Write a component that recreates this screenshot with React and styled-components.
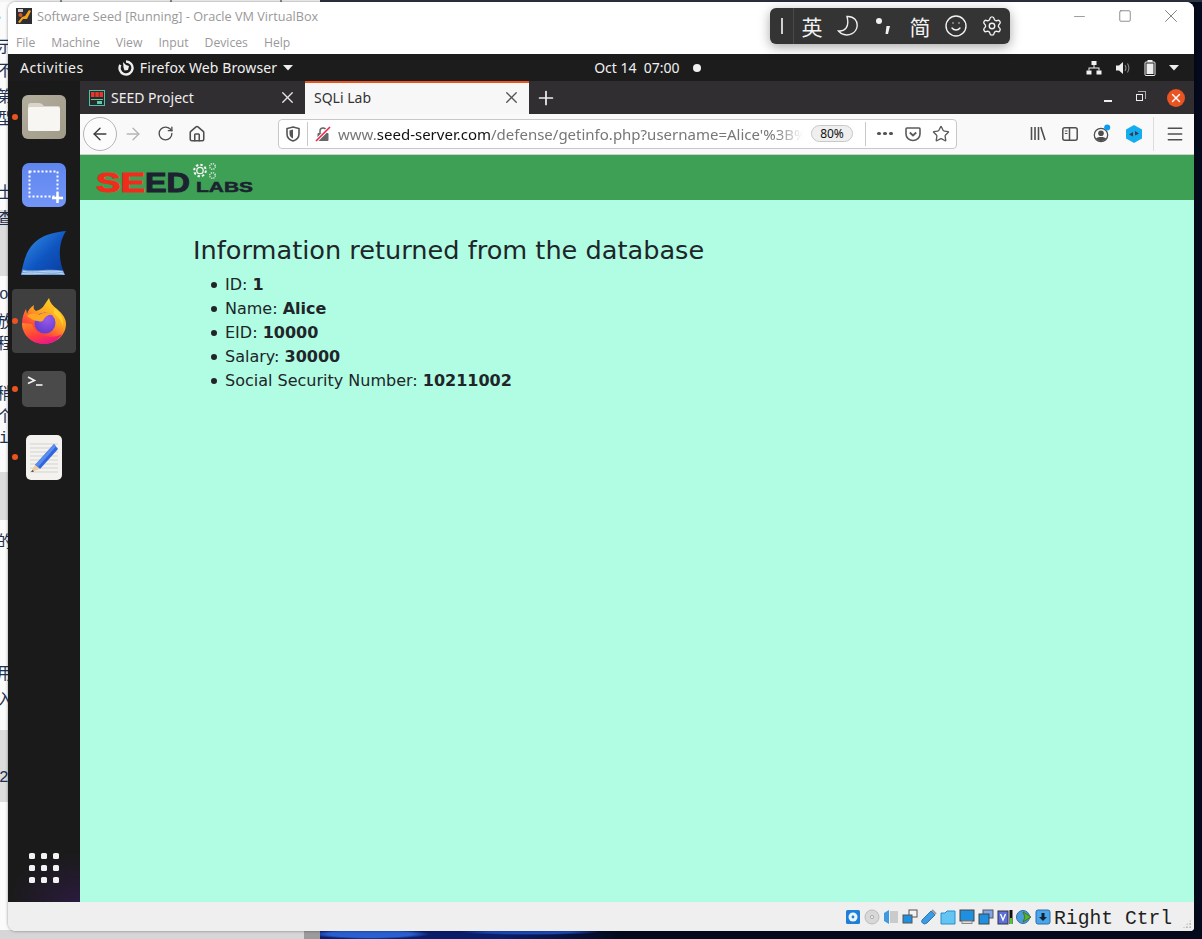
import React from 'react';
import styled, { createGlobalStyle } from 'styled-components';
import { ArrowLeft, ArrowRight, RotateCw, House, Star, Menu, X, Plus, Minus, Smile, Settings, Square } from 'lucide-react';

const GlobalStyle = createGlobalStyle`
  html, body { margin: 0; padding: 0; background: #040a1c; }
  * { box-sizing: border-box; }
`;

const edgeText = [
  { top: 14, text: '’' }, { top: 36, text: '示' }, { top: 60, text: '不' }, { top: 86, text: '第' },
  { top: 108, text: '型' }, { top: 182, text: '士' }, { top: 208, text: '查' }, { top: 286, text: 'ol', mono: true },
  { top: 311, text: '放' }, { top: 333, text: '程' }, { top: 383, text: '稍' }, { top: 406, text: '个' },
  { top: 430, text: 'i', mono: true }, { top: 531, text: '的' }, { top: 663, text: '用' }, { top: 689, text: '入' },
  { top: 769, text: '25', mono: true },
];

const bands = [
  { top: 210, height: 66 },
  { top: 472, height: 48 },
  { top: 730, height: 72 },
];

function WindowIcon() {
  return (
    <svg width="16" height="16" viewBox="0 0 16 16">
      <rect width="16" height="16" fill="#2d2d33" />
      <path d="M2 14 L6 9 L9 8 L13 2 L15 3 L11 11 L7 11 L4 15 Z" fill="#f2a31c" />
      <circle cx="4.5" cy="7" r="2" fill="#d9541e" />
      <rect x="2" y="1" width="5" height="3" fill="#c9c9c9" />
    </svg>
  );
}

function FirefoxGlyph() {
  return (
    <svg width="16" height="16" viewBox="0 0 16 16" fill="none">
      <path d="M8 1.5 A6.5 6.5 0 1 1 2.4 4.8" stroke="#f0f0f0" strokeWidth="2.4" />
      <path d="M5 2 L8 5 L11 6 L10 10 L6.5 10.5 L5.5 7.5 Z" fill="#f0f0f0" />
    </svg>
  );
}

function Caret({ color = '#eee' }) {
  return (
    <svg width="10" height="6" viewBox="0 0 10 6"><path d="M0 0 H10 L5 5.5 Z" fill={color} /></svg>
  );
}

function NetworkIcon() {
  return (
    <svg width="16" height="14" viewBox="0 0 16 14" fill="#f0f0f0">
      <rect x="5.5" y="0" width="5" height="4" />
      <rect x="0.5" y="9.5" width="5" height="4" />
      <rect x="10.5" y="9.5" width="5" height="4" />
      <path d="M7.5 4h1v2.5h5v3h-1v-2h-9v2h-1v-3h5z" />
    </svg>
  );
}

function VolumeIcon() {
  return (
    <svg width="16" height="14" viewBox="0 0 16 14" fill="none">
      <path d="M1 4.5 H4 L8 1 V13 L4 9.5 H1 Z" fill="#eee" />
      <path d="M10 4 Q12 7 10 10 M12.5 2.5 Q15.2 7 12.5 11.5" stroke="#888" strokeWidth="1.1" />
    </svg>
  );
}

function BatteryIcon() {
  return (
    <svg width="12" height="16" viewBox="0 0 12 16">
      <rect x="3.5" y="0" width="5" height="2" fill="#eee" />
      <rect x="1" y="2" width="10" height="13.5" rx="1" fill="none" stroke="#eee" />
      <rect x="2.5" y="3.5" width="7" height="10.5" fill="#eee" />
    </svg>
  );
}

function FilesIcon() {
  return (
    <svg width="44" height="44" viewBox="0 0 44 44">
      <defs>
        <linearGradient id="filesBg" x1="0" y1="0" x2="1" y2="1">
          <stop offset="0" stopColor="#b3ad9e" />
          <stop offset="1" stopColor="#a09a88" />
        </linearGradient>
      </defs>
      <rect width="44" height="44" rx="6" fill="url(#filesBg)" />
      <path d="M6 11 Q6 8 9 8 H17 Q20 8 22 11 H36 Q38 11 38 13 V34 Q38 36 36 36 H8 Q6 36 6 34 Z" fill="#d9d5ca" />
      <path d="M6 14 Q6 12 8 12 H36 Q38 12 38 14 V34 Q38 36 36 36 H8 Q6 36 6 34 Z" fill="#f7f6f3" />
    </svg>
  );
}

function ScreenshotIcon() {
  return (
    <svg width="44" height="44" viewBox="0 0 44 44" fill="none">
      <defs>
        <linearGradient id="shotBg" x1="0" y1="0" x2="0" y2="1">
          <stop offset="0" stopColor="#5f86ef" />
          <stop offset="1" stopColor="#7395f7" />
        </linearGradient>
      </defs>
      <rect width="44" height="44" rx="7" fill="url(#shotBg)" />
      <rect x="7.5" y="8.5" width="28" height="25" stroke="#fff" strokeWidth="2" strokeDasharray="2 2" />
      <path d="M30 35 H41 M35.5 29.5 V40" stroke="#fff" strokeWidth="2.4" />
    </svg>
  );
}

function WiresharkIcon() {
  return (
    <svg width="46" height="46" viewBox="0 0 46 46">
      <defs>
        <linearGradient id="finBg" x1="0" y1="0" x2="1" y2="1">
          <stop offset="0" stopColor="#3a94ee" />
          <stop offset="0.55" stopColor="#0f55c0" />
          <stop offset="1" stopColor="#0a3c9c" />
        </linearGradient>
      </defs>
      <path d="M0 45 C4 22 10 4 45 1 C38 12 36 28 44 45 Z" fill="url(#finBg)" />
      <path d="M0 45 C0.5 43 1 41 1.5 39.5 C14 42 28 38 42 40.5 L44 45 Z" fill="#6f9fd8" />
      <path d="M2 41.5 C14 43.5 28 39.5 42 42 M1 43.5 C14 45 30 41 43 44" stroke="#dbe8f7" strokeWidth="0.8" fill="none" />
    </svg>
  );
}

function FirefoxIcon() {
  return (
    <svg width="44" height="46" viewBox="0 0 44 46">
      <defs>
        <linearGradient id="foxBody" x1="0.9" y1="0" x2="0.3" y2="1">
          <stop offset="0" stopColor="#ffe226" />
          <stop offset="0.45" stopColor="#ffa11f" />
          <stop offset="0.72" stopColor="#ff4a3a" />
          <stop offset="1" stopColor="#e2138a" />
        </linearGradient>
        <linearGradient id="foxLeft" x1="0" y1="0" x2="0.6" y2="1">
          <stop offset="0" stopColor="#ff8a1e" />
          <stop offset="0.6" stopColor="#ff3d3d" />
          <stop offset="1" stopColor="#e8178a" />
        </linearGradient>
        <radialGradient id="foxGlobe" cx="0.6" cy="0.3" r="0.8">
          <stop offset="0" stopColor="#9b59ea" />
          <stop offset="1" stopColor="#5a39c9" />
        </radialGradient>
      </defs>
      <path d="M27 0 C28 5 31 8 35 11 C41 16 44 21 44 26 C44 37 34 46 22 46 C10 46 0 37 0 25 C0 19 2 15 4 11 L5 16 C6 12 9 9 12 7 C11 10 12 12 14 13 C17 12 19 11 21 9 C23 6 25 3 27 0 Z" fill="url(#foxBody)" />
      <path d="M0 25 C0 37 10 46 22 46 C30 46 36 42 40 36 C30 42 14 38 10 26 Z" fill="url(#foxLeft)" />
      <circle cx="23" cy="25" r="10.5" fill="url(#foxGlobe)" />
      <path d="M5 18 C9 15 13 15 17 17 C21 14 27 14 31 17 C27 16 24 18 22 21 C21 24 18 24 16 23 C13 23 9 21 5 18 Z" fill="#ffa623" />
      <path d="M32 10 C38 14 42 20 41 28 C39 22 36 18 32 16 Z" fill="#ffcf2b" />
    </svg>
  );
}

function TerminalIcon() {
  return (
    <svg width="44" height="36" viewBox="0 0 44 36" fill="none">
      <rect width="44" height="36" rx="5" fill="#4a4a4a" />
      <path d="M6 6 L12.5 9.5 L6 12.5" stroke="#f2f2f2" strokeWidth="1.6" />
      <path d="M14 14 H20.5" stroke="#f2f2f2" strokeWidth="1.6" />
    </svg>
  );
}

function GeditIcon() {
  return (
    <svg width="36" height="45" viewBox="0 0 36 45" fill="none">
      <rect width="36" height="45" rx="5" fill="#f3f2ef" />
      <path d="M4 9 H32 M4 13 H32 M4 17 H32 M4 21 H32 M4 25 H32 M4 29 H32 M4 33 H32 M4 37 H32" stroke="#d4d3cf" strokeWidth="1" />
      <path d="M28 9 L32 14 L14 34 L9 30 Z" fill="#2f66dd" />
      <path d="M28 9 L30 11.5 L12 32 L9 30 Z" fill="#5a8cf0" />
      <path d="M9 30 L14 34 L5 37 Z" fill="#eccf9c" />
      <path d="M6.5 35 L8 36.5 L5 37 Z" fill="#333" />
    </svg>
  );
}

function FaviconSeed() {
  return (
    <svg width="16" height="16" viewBox="0 0 16 16">
      <rect width="16" height="16" fill="#4ac4a8" />
      <rect x="1" y="1" width="14" height="14" fill="#2a2a2a" />
      <rect x="2" y="2" width="3.5" height="5" fill="#e8362a" />
      <rect x="6.3" y="2" width="3.5" height="5" fill="#e8362a" />
      <rect x="10.5" y="2" width="3.5" height="5" fill="#e8362a" />
      <rect x="2" y="9" width="12" height="1" fill="#5ec8a8" />
      <rect x="8" y="11" width="5" height="3" fill="#5ec8a8" />
    </svg>
  );
}

function ShieldIcon() {
  return (
    <svg width="14" height="16" viewBox="0 0 14 16" fill="none">
      <path d="M7 1 L13 2.5 V8 C13 11.5 10 14 7 15 C4 14 1 11.5 1 8 V2.5 Z" stroke="#555" strokeWidth="1.6" />
      <path d="M7 3.5 V12.5 C5 11.5 3.5 10 3.5 8 V4.5 Z" fill="#555" />
    </svg>
  );
}

function BrokenLock() {
  return (
    <svg width="16" height="16" viewBox="0 0 16 16" fill="none">
      <path d="M5 7 V5 A3 3 0 0 1 11 5 V7" stroke="#666" strokeWidth="1.5" />
      <rect x="2.5" y="7" width="11" height="8" rx="1" fill="#666" />
      <path d="M1 15 L15 1" stroke="#fff" strokeWidth="3.6" />
      <path d="M1 15 L15 1" stroke="#e8254d" strokeWidth="1.6" />
    </svg>
  );
}

function PocketIcon() {
  return (
    <svg width="16" height="16" viewBox="0 0 16 16" fill="none">
      <path d="M2 2 H14 Q15 2 15 3 V8 A7 6.5 0 0 1 1 8 V3 Q1 2 2 2 Z" stroke="#5b5b5b" strokeWidth="1.6" />
      <path d="M4.8 6.5 L8 9.5 L11.2 6.5" stroke="#5b5b5b" strokeWidth="1.8" />
    </svg>
  );
}

function LibraryIcon() {
  return (
    <svg width="16" height="15" viewBox="0 0 16 15" stroke="#4f4f4f" strokeWidth="1.6" fill="none">
      <path d="M1.5 1 V14 M5 1 V14 M8.5 1 V14 M10.8 1 L15 14" />
    </svg>
  );
}

function SidebarIcon() {
  return (
    <svg width="16" height="14" viewBox="0 0 16 14" fill="none" stroke="#4f4f4f" strokeWidth="1.5">
      <rect x="0.8" y="0.8" width="14.4" height="12.4" rx="2" />
      <path d="M7.5 1 V13" />
      <path d="M2.8 4 H5.5 M2.8 6.5 H5.5" strokeWidth="1" />
    </svg>
  );
}

function AccountIcon() {
  return (
    <svg width="20" height="20" viewBox="0 0 20 20" fill="none">
      <circle cx="9" cy="11" r="6.7" stroke="#4f4f4f" strokeWidth="1.3" />
      <circle cx="9" cy="9.2" r="2.8" fill="#4f4f4f" />
      <path d="M3.8 14.8 C5 12.4 13 12.4 14.2 14.8 A6.7 6.7 0 0 1 3.8 14.8 Z" fill="#4f4f4f" />
      <circle cx="15.2" cy="3.6" r="3" fill="#0a9cf0" />
    </svg>
  );
}

function ExtensionIcon() {
  return (
    <svg width="16" height="18" viewBox="0 0 16 18">
      <path d="M8 0 L16 4.5 V13.5 L8 18 L0 13.5 V4.5 Z" fill="#12aef0" />
      <path d="M3 9.5 L7 7 V11.5 Z M13 8.5 L9 6 V10.5 Z" fill="#3c3c48" />
    </svg>
  );
}

function ImeDots() {
  return (
    <svg width="18" height="20" viewBox="0 0 18 20" fill="#f2f2f2">
      <circle cx="4" cy="5" r="3" />
      <path d="M11.5 10 H15 L13 18 H10.5 Z" />
    </svg>
  );
}

function ImeMoon() {
  return (
    <svg width="22" height="22" viewBox="0 0 22 22" fill="none">
      <path d="M10 1.5 C17 1 21 6 20 12 C19 18 12 21 7 19.5 C5 19 3 18 1.5 16 C7 16.5 13 13 10 1.5 Z" stroke="#eee" strokeWidth="1.4" />
    </svg>
  );
}

function SeedLogo() {
  return (
    <svg width="160" height="32" viewBox="0 0 160 32">
      <text x="0" y="29" fontFamily="Liberation Sans, sans-serif" fontWeight="700" fontSize="27" textLength="49" lengthAdjust="spacingAndGlyphs" fill="#f22c1c" stroke="#f22c1c" strokeWidth="1">SE</text>
      <text x="49" y="29" fontFamily="Liberation Sans, sans-serif" fontWeight="700" fontSize="27" textLength="45" lengthAdjust="spacingAndGlyphs" fill="#1d2230" stroke="#1d2230" strokeWidth="1">ED</text>
      <text x="100" y="29" fontFamily="Liberation Sans, sans-serif" fontWeight="700" fontSize="15" textLength="57" lengthAdjust="spacingAndGlyphs" fill="#1d2230" stroke="#1d2230" strokeWidth="0.5">LABS</text>
      <circle cx="104" cy="7.5" r="3.2" fill="none" stroke="#f4f4f4" strokeWidth="1.3" />
      <circle cx="104" cy="7.5" r="5.8" fill="none" stroke="#f4f4f4" strokeWidth="2" strokeDasharray="2.4 2.1" />
      <circle cx="116.5" cy="3.5" r="2.8" fill="none" stroke="#d5e2d5" strokeWidth="1.6" strokeDasharray="1.2 1" />
      <circle cx="116.5" cy="12.5" r="2.8" fill="none" stroke="#d5e2d5" strokeWidth="1.6" strokeDasharray="1.2 1" />
    </svg>
  );
}

const statusIcons = [
  <g key="hd"><rect x="1" y="1" width="14" height="14" rx="1.5" fill="#1d7fd8" /><circle cx="8" cy="8" r="4.5" fill="#eaf4fd" /><circle cx="8" cy="8" r="1.4" fill="#1d7fd8" /></g>,
  <g key="cd"><circle cx="8" cy="8" r="7" fill="#d8d8d8" stroke="#bbb" /><circle cx="8" cy="8" r="1.6" fill="#f4f4f4" stroke="#aaa" /></g>,
  <g key="audio"><path d="M1 4 L6 1 V15 L1 12 Z" fill="#3f9be0" /><path d="M7 3 H15 M7 5 H15 M7 7 H15 M7 9 H15 M7 11 H15 M7 13 H15" stroke="#a5a5a5" /></g>,
  <g key="net"><rect x="7" y="1" width="8" height="7" fill="#f4f4f4" stroke="#555" /><rect x="1" y="6" width="9" height="8" fill="#1f8fe0" stroke="#555" /></g>,
  <g key="usb"><path d="M1 11 L10 2 L14 6 L6 14 Q3 16 1.5 14 Q0 13 1 11 Z" fill="#3f9be0" stroke="#2878c0" /><path d="M11 1 L15 5" stroke="#999" strokeWidth="2" /></g>,
  <g key="folder"><path d="M1 4 V15 H15 V2 H7 L5 4 Z" fill="#63c5f4" stroke="#2d8ccc" /></g>,
  <g key="display"><rect x="1" y="1" width="14" height="11" fill="#1f8fe0" stroke="#444" /><rect x="3" y="12" width="10" height="2.5" fill="#ddd" stroke="#888" /></g>,
  <g key="capture"><rect x="5" y="1" width="10" height="8" fill="#7fa8e8" stroke="#556" /><rect x="1" y="5" width="10" height="10" fill="#1f8fe0" stroke="#444" /></g>,
  <g key="vt"><rect x="1" y="2" width="10" height="13" fill="#5b6fd8" stroke="#334" /><path d="M3.5 5 L6 11 L8.5 5" stroke="#fff" strokeWidth="1.4" fill="none" /><rect x="12.5" y="1" width="3" height="14" fill="#111" /><rect x="13" y="9" width="2" height="6" fill="#4ecb2a" /></g>,
  <g key="globe"><circle cx="7" cy="8" r="6.5" fill="#4a9bd8" stroke="#2a6ca8" /><path d="M7 3 L15 8 L7 13 L9 8 Z" fill="#5cb531" stroke="#387a1e" /></g>,
  <g key="down"><rect x="1" y="1" width="14" height="14" rx="2" fill="#4aa5ea" stroke="#2a6ca8" /><path d="M6.5 4 H9.5 V8 H12 L8 12 L4 8 H6.5 Z" fill="#123" /></g>,
];

export default function App() {
  return (
    <>
      <GlobalStyle />
      <Desktop>
        <BackWindow>
          <TopCrumbs />
          {bands.map((b) => (
            <GreyBand key={b.top} $top={b.top} $height={b.height} />
          ))}
          {edgeText.map((t) => (
            <EdgeGlyph key={t.top} $top={t.top} $mono={t.mono}>{t.text}</EdgeGlyph>
          ))}
          <BackFoot />
        </BackWindow>
        <WallStreak />

        <VmWindow>
          <TitleBar>
            <WindowIcon />
            <TitleText>Software Seed [Running] - Oracle VM VirtualBox</TitleText>
            <WinButtons>
              <WinButton><Minus size={17} strokeWidth={1} /></WinButton>
              <WinButton><Square size={14} strokeWidth={1.4} /></WinButton>
              <WinButton><X size={22} strokeWidth={1} /></WinButton>
            </WinButtons>
          </TitleBar>
          <MenuBar>
            <span>File</span><span>Machine</span><span>View</span><span>Input</span><span>Devices</span><span>Help</span>
          </MenuBar>

          <GnomeBar>
            <Activities>Activities</Activities>
            <AppMenu><FirefoxGlyph /><span>Firefox Web Browser</span><Caret /></AppMenu>
            <Clock>Oct 14&nbsp;&nbsp;07:00</Clock>
            <ClockDot />
            <Tray>
              <NetworkIcon />
              <VolumeIcon />
              <BatteryIcon />
              <Caret />
            </Tray>
          </GnomeBar>

          <Guest>
            <Dock>
              <DockItem><FilesIcon /><RunDot /></DockItem>
              <DockItem><ScreenshotIcon /></DockItem>
              <DockItem><WiresharkIcon /></DockItem>
              <DockItem $active><FirefoxIcon /><RunDot /></DockItem>
              <DockItem><TerminalIcon /><RunDot /></DockItem>
              <DockItem><GeditIcon /><RunDot /></DockItem>
              <AppGrid>
                {Array.from({ length: 9 }).map((_, i) => <i key={i} />)}
              </AppGrid>
            </Dock>

            <Browser>
              <TabBar>
                <Tab>
                  <FaviconSeed />
                  <TabLabel>SEED Project</TabLabel>
                  <X size={19} strokeWidth={1.7} color="#e6e6e6" />
                </Tab>
                <Tab $active>
                  <TabLabel>SQLi Lab</TabLabel>
                  <X size={19} strokeWidth={1.7} color="#555" />
                </Tab>
                <NewTab><Plus size={22} strokeWidth={1.9} color="#eee" /></NewTab>
                <BrowserControls>
                  <MinGlyph />
                  <RestoreGlyph />
                  <CloseCircle><X size={14} strokeWidth={2.4} color="#fff" /></CloseCircle>
                </BrowserControls>
              </TabBar>

              <NavBar>
                <BackButton><ArrowLeft size={20} strokeWidth={1.7} color="#3d3d3d" /></BackButton>
                <ToolSlot><ArrowRight size={20} strokeWidth={1.6} color="#b5b5b5" /></ToolSlot>
                <ToolSlot><RotateCw size={17} strokeWidth={1.9} color="#4f4f4f" /></ToolSlot>
                <ToolSlot><House size={18} strokeWidth={2.1} color="#4f4f4f" /></ToolSlot>
                <UrlBox>
                  <IconSlot $width={28}><ShieldIcon /></IconSlot>
                  <UrlDivider />
                  <IconSlot $width={29}><BrokenLock /></IconSlot>
                  <UrlText>www.<b>seed-server.com</b>/defense/getinfo.php?username=Alice'%3B%</UrlText>
                  <ZoomPill>80%</ZoomPill>
                  <UrlDivider $gap={12} />
                  <Ellipsis><i /><i /><i /></Ellipsis>
                  <IconSlot $width={28}><PocketIcon /></IconSlot>
                  <IconSlot $width={28}><Star size={18} strokeWidth={1.8} color="#5b5b5b" /></IconSlot>
                </UrlBox>
                <ExtraTools>
                  <ToolSlot><LibraryIcon /></ToolSlot>
                  <ToolSlot><SidebarIcon /></ToolSlot>
                  <ToolSlot><AccountIcon /></ToolSlot>
                  <ToolSlot><ExtensionIcon /></ToolSlot>
                </ExtraTools>
                <ToolDivider />
                <ToolSlot><Menu size={20} strokeWidth={1.8} color="#4f4f4f" /></ToolSlot>
              </NavBar>

              <SiteHeader><SeedLogo /></SiteHeader>
              <SiteBody>
                <Heading>Information returned from the database</Heading>
                <InfoList>
                  <li>ID: <b>1</b></li>
                  <li>Name: <b>Alice</b></li>
                  <li>EID: <b>10000</b></li>
                  <li>Salary: <b>30000</b></li>
                  <li>Social Security Number: <b>10211002</b></li>
                </InfoList>
              </SiteBody>
            </Browser>
          </Guest>

          <StatusBar>
            <StatusIcons>
              {statusIcons.map((icon) => (
                <svg key={icon.key} width="16" height="16" viewBox="0 0 16 16">{icon}</svg>
              ))}
            </StatusIcons>
            <HostKey>Right Ctrl</HostKey>
            <Grip />
          </StatusBar>
        </VmWindow>

        <ImeBar>
          <ImeCursor />
          <ImeDivider />
          <ImeCell $cjk>英</ImeCell>
          <ImeCell><ImeMoon /></ImeCell>
          <ImeCell><ImeDots /></ImeCell>
          <ImeCell $cjk>简</ImeCell>
          <ImeCell><Smile size={24} strokeWidth={1.4} /></ImeCell>
          <ImeCell><Settings size={22} strokeWidth={1.5} /></ImeCell>
        </ImeBar>
      </Desktop>
    </>
  );
}

const Desktop = styled.div`
  position: relative;
  width: 1202px;
  height: 939px;
  padding: 2px 8px 8px;
  overflow: hidden;
  background: linear-gradient(#2c3342 0 2px, #040a1c 2px);
`;

const BackWindow = styled.div`
  position: absolute;
  left: 0;
  top: 0;
  width: 320px;
  height: 939px;
  overflow: hidden;
  background: #fbfbfb;
`;

const TopCrumbs = styled.div`
  height: 2px;
  background: repeating-linear-gradient(90deg, #f4f4f4 0 60px, #8a8a8a 60px 62px, #f4f4f4 62px 110px);
`;

const GreyBand = styled.div`
  position: absolute;
  left: 0;
  right: 0;
  top: ${(p) => p.$top}px;
  height: ${(p) => p.$height}px;
  background: #dcdcdc;
`;

const EdgeGlyph = styled.span`
  position: absolute;
  left: ${(p) => (p.$mono ? '-1px' : '-3px')};
  top: ${(p) => p.$top}px;
  font: 16px/18px ${(p) => (p.$mono ? '"Liberation Mono", monospace' : '"Noto Sans CJK SC", sans-serif')};
  color: #1e3050;
`;

const BackFoot = styled.div`
  position: absolute;
  left: 0;
  right: 0;
  bottom: 0;
  height: 9px;
  background: linear-gradient(90deg, #d6d6d6 304px, #9b9b9b 304px);
`;

const WallStreak = styled.div`
  position: absolute;
  left: 320px;
  bottom: 0;
  width: 300px;
  height: 8px;
  background: radial-gradient(ellipse 60px 5px at 50px 3px, #2a5fd0 70%, transparent 100%),
    radial-gradient(ellipse 70px 3px at 210px 1px, #1c4ab8 60%, transparent 100%),
    linear-gradient(90deg, #0a1d6a 60%, transparent);
`;

const VmWindow = styled.div`
  position: relative;
  width: 1186px;
  height: 929px;
  display: flex;
  flex-direction: column;
  overflow: hidden;
  border-radius: 8px 8px 4px 8px;
  background: #fff;
  box-shadow: 0 0 3px rgba(0, 0, 0, 0.45);
`;

const TitleBar = styled.div`
  height: 34px;
  flex: none;
  display: flex;
  align-items: center;
  padding: 0 0 6px 8px;
  background: #fff;
`;

const TitleText = styled.span`
  margin-left: 5px;
  font: 12.7px "Open Sans", sans-serif;
  color: #999;
`;

const WinButtons = styled.div`
  margin-left: auto;
  display: flex;
  color: #777;
`;

const WinButton = styled.div`
  width: 46px;
  height: 26px;
  display: flex;
  align-items: center;
  justify-content: center;
`;

const MenuBar = styled.div`
  height: 18px;
  flex: none;
  display: flex;
  align-items: flex-start;
  gap: 16px;
  padding: 0 0 0 8px;
  font: 12.2px/14px "Open Sans", sans-serif;
  color: #999;
`;

const GnomeBar = styled.div`
  height: 27px;
  flex: none;
  display: flex;
  align-items: center;
  padding-left: 12px;
  background: #1c1c1c;
  color: #f0f0f0;
  font: 14px "Noto Sans", sans-serif;
`;

const Activities = styled.span`
  letter-spacing: 0.55px;
`;

const AppMenu = styled.div`
  display: flex;
  align-items: center;
  gap: 6px;
  margin-left: 34px;
  letter-spacing: 0.1px;
`;

const Clock = styled.span`
  flex: none;
  width: 86px;
  margin-left: 301px;
  white-space: nowrap;
`;

const ClockDot = styled.span`
  width: 8px;
  height: 8px;
  margin-left: 13px;
  border-radius: 50%;
  background: #f0f0f0;
`;

const Tray = styled.div`
  margin-left: auto;
  display: flex;
  align-items: center;
  gap: 13px;
  padding-right: 15px;
`;

const Guest = styled.div`
  flex: 1;
  min-height: 0;
  display: flex;
`;

const Dock = styled.div`
  position: relative;
  width: 72px;
  flex: none;
  display: flex;
  flex-direction: column;
  align-items: center;
  padding: 2px 0 19px;
  background: radial-gradient(ellipse 70px 50px at 70px 100%, #2a1b3d 0, transparent 100%), #1a1a1a;
`;

const DockItem = styled.div`
  position: relative;
  width: 64px;
  height: 64px;
  margin: 2px 0;
  flex: none;
  display: flex;
  align-items: center;
  justify-content: center;
  border-radius: 4px;
  background: ${(p) => (p.$active ? '#3f3f3f' : 'transparent')};
`;

const RunDot = styled.span`
  position: absolute;
  left: 0;
  top: 50%;
  width: 6px;
  height: 6px;
  margin-top: -3px;
  border-radius: 50%;
  background: #e95420;
`;

const AppGrid = styled.div`
  margin-top: auto;
  display: grid;
  grid-template-columns: repeat(3, 6px);
  gap: 6px;
  i {
    height: 6px;
    border-radius: 1.5px;
    background: #f2f2f2;
  }
`;

const Browser = styled.div`
  flex: 1;
  min-width: 0;
  display: flex;
  flex-direction: column;
`;

const TabBar = styled.div`
  height: 33px;
  flex: none;
  display: flex;
  background: #312e31;
`;

const Tab = styled.div`
  width: ${(p) => (p.$active ? '224px' : '225px')};
  display: flex;
  align-items: center;
  gap: 6px;
  padding: 0 8px 2px 9px;
  background: ${(p) => (p.$active ? '#f7f7f7' : 'transparent')};
  border-top: 2px solid ${(p) => (p.$active ? '#e95420' : 'transparent')};
  color: ${(p) => (p.$active ? '#333' : '#eee')};
  font: 14px "Noto Sans", sans-serif;
`;

const TabLabel = styled.span`
  flex: 1;
`;

const NewTab = styled.div`
  width: 34px;
  display: flex;
  align-items: center;
  justify-content: center;
`;

const BrowserControls = styled.div`
  margin-left: auto;
  display: flex;
  align-items: center;
  gap: 24px;
  padding-right: 9px;
`;

const MinGlyph = styled.span`
  width: 8px;
  height: 1.5px;
  margin-top: 7px;
  background: #eee;
`;

const RestoreGlyph = styled.span`
  position: relative;
  width: 7px;
  height: 7px;
  border: 1.5px solid #eee;
  &::after {
    content: '';
    position: absolute;
    left: 1px;
    top: -4px;
    width: 7px;
    height: 7px;
    border-top: 1px solid #aaa;
    border-right: 1px solid #aaa;
  }
`;

const CloseCircle = styled.span`
  width: 18px;
  height: 18px;
  border-radius: 50%;
  display: flex;
  align-items: center;
  justify-content: center;
  background: #e95420;
`;

const NavBar = styled.div`
  height: 41px;
  flex: none;
  display: flex;
  align-items: center;
  padding: 0 0 1px 3px;
  background: #f9f9f9;
  border-bottom: 1px solid #cfcfcf;
`;

const BackButton = styled.div`
  width: 34px;
  height: 34px;
  flex: none;
  display: flex;
  align-items: center;
  justify-content: center;
  border: 1px solid #b5b5b5;
  border-radius: 50%;
  background: #fcfcfc;
`;

const ToolSlot = styled.div`
  width: 32px;
  height: 32px;
  flex: none;
  display: flex;
  align-items: center;
  justify-content: center;
`;

const UrlBox = styled.div`
  width: 679px;
  height: 30px;
  margin-left: 65px;
  flex: none;
  display: flex;
  align-items: center;
  border: 1px solid #c8c8c8;
  border-radius: 4px;
  background: #fff;
`;

const IconSlot = styled.div`
  width: ${(p) => p.$width}px;
  flex: none;
  display: flex;
  align-items: center;
  justify-content: center;
`;

const UrlDivider = styled.span`
  width: 1px;
  height: 24px;
  margin-left: ${(p) => p.$gap || 0}px;
  flex: none;
  background: #c8c8c8;
`;

const UrlText = styled.div`
  width: 465px;
  margin-left: 1px;
  flex: none;
  overflow: hidden;
  white-space: nowrap;
  font: 15px "Noto Sans", sans-serif;
  color: #777;
  mask-image: linear-gradient(90deg, #000 94%, transparent);
  b {
    font-weight: 400;
    color: #111;
  }
`;

const ZoomPill = styled.span`
  width: 42px;
  height: 17px;
  margin-left: 8px;
  flex: none;
  display: flex;
  align-items: center;
  justify-content: center;
  border: 1px solid #c8c8c8;
  border-radius: 9px;
  background: #efefef;
  font: 12px "Noto Sans", sans-serif;
  color: #111;
`;

const Ellipsis = styled.span`
  width: 28px;
  margin-left: 5px;
  flex: none;
  display: flex;
  justify-content: center;
  gap: 2.5px;
  i {
    width: 3.5px;
    height: 3.5px;
    border-radius: 50%;
    background: #555;
  }
`;

const ExtraTools = styled.div`
  margin-left: 65px;
  display: flex;
`;

const ToolDivider = styled.span`
  width: 1px;
  height: 34px;
  margin: 0 5px 0 3px;
  flex: none;
  background: #dcdcdc;
`;

const SiteHeader = styled.div`
  height: 45px;
  flex: none;
  padding: 8px 0 0 16px;
  background: #3ea055;
  svg {
    display: block;
  }
`;

const SiteBody = styled.div`
  flex: 1;
  padding: 35px 0 0 113px;
  background: #b0fde4;
  color: #212529;
  font-family: "DejaVu Sans", sans-serif;
`;

const Heading = styled.h1`
  margin: 0;
  font-size: 25.6px;
  line-height: 30px;
  font-weight: 400;
`;

const InfoList = styled.ul`
  margin: 8px 0 0;
  padding-left: 32px;
  list-style: none;
  font-size: 16px;
  line-height: 24px;
  li {
    position: relative;
  }
  li::before {
    content: '';
    position: absolute;
    left: -14px;
    top: 9px;
    width: 6px;
    height: 6px;
    border-radius: 50%;
    background: currentColor;
  }
`;

const StatusBar = styled.div`
  position: relative;
  height: 29px;
  flex: none;
  display: flex;
  align-items: center;
  padding-left: 837px;
  background: #efefef;
`;

const StatusIcons = styled.div`
  display: flex;
  gap: 3px;
  svg {
    display: block;
  }
`;

const HostKey = styled.span`
  margin: 4px 0 0 3px;
  font: 19.7px "Liberation Mono", monospace;
  color: #1f1f1f;
  white-space: nowrap;
`;

const Grip = styled.span`
  position: absolute;
  right: 2px;
  bottom: 2px;
  width: 10px;
  height: 10px;
  background: radial-gradient(circle, #b5b5b5 1px, transparent 1.2px) 0 0 / 3.3px 3.3px;
  clip-path: polygon(100% 0, 100% 100%, 0 100%);
`;

const ImeBar = styled.div`
  position: absolute;
  left: 770px;
  top: 8px;
  width: 240px;
  height: 36px;
  display: flex;
  align-items: center;
  border-radius: 6px;
  background: #343434;
  color: #f2f2f2;
  box-shadow: 0 3px 12px rgba(0, 0, 0, 0.35);
`;

const ImeCursor = styled.span`
  width: 3px;
  height: 16px;
  margin-left: 11px;
  background: #d0d0d0;
`;

const ImeDivider = styled.span`
  width: 1px;
  height: 36px;
  margin-left: 10px;
  background: #4a4a4a;
`;

const ImeCell = styled.span`
  width: 36px;
  flex: none;
  display: flex;
  align-items: center;
  justify-content: center;
  font: ${(p) => (p.$cjk ? '21px' : '20px')} "Noto Sans CJK SC", sans-serif;
`;
